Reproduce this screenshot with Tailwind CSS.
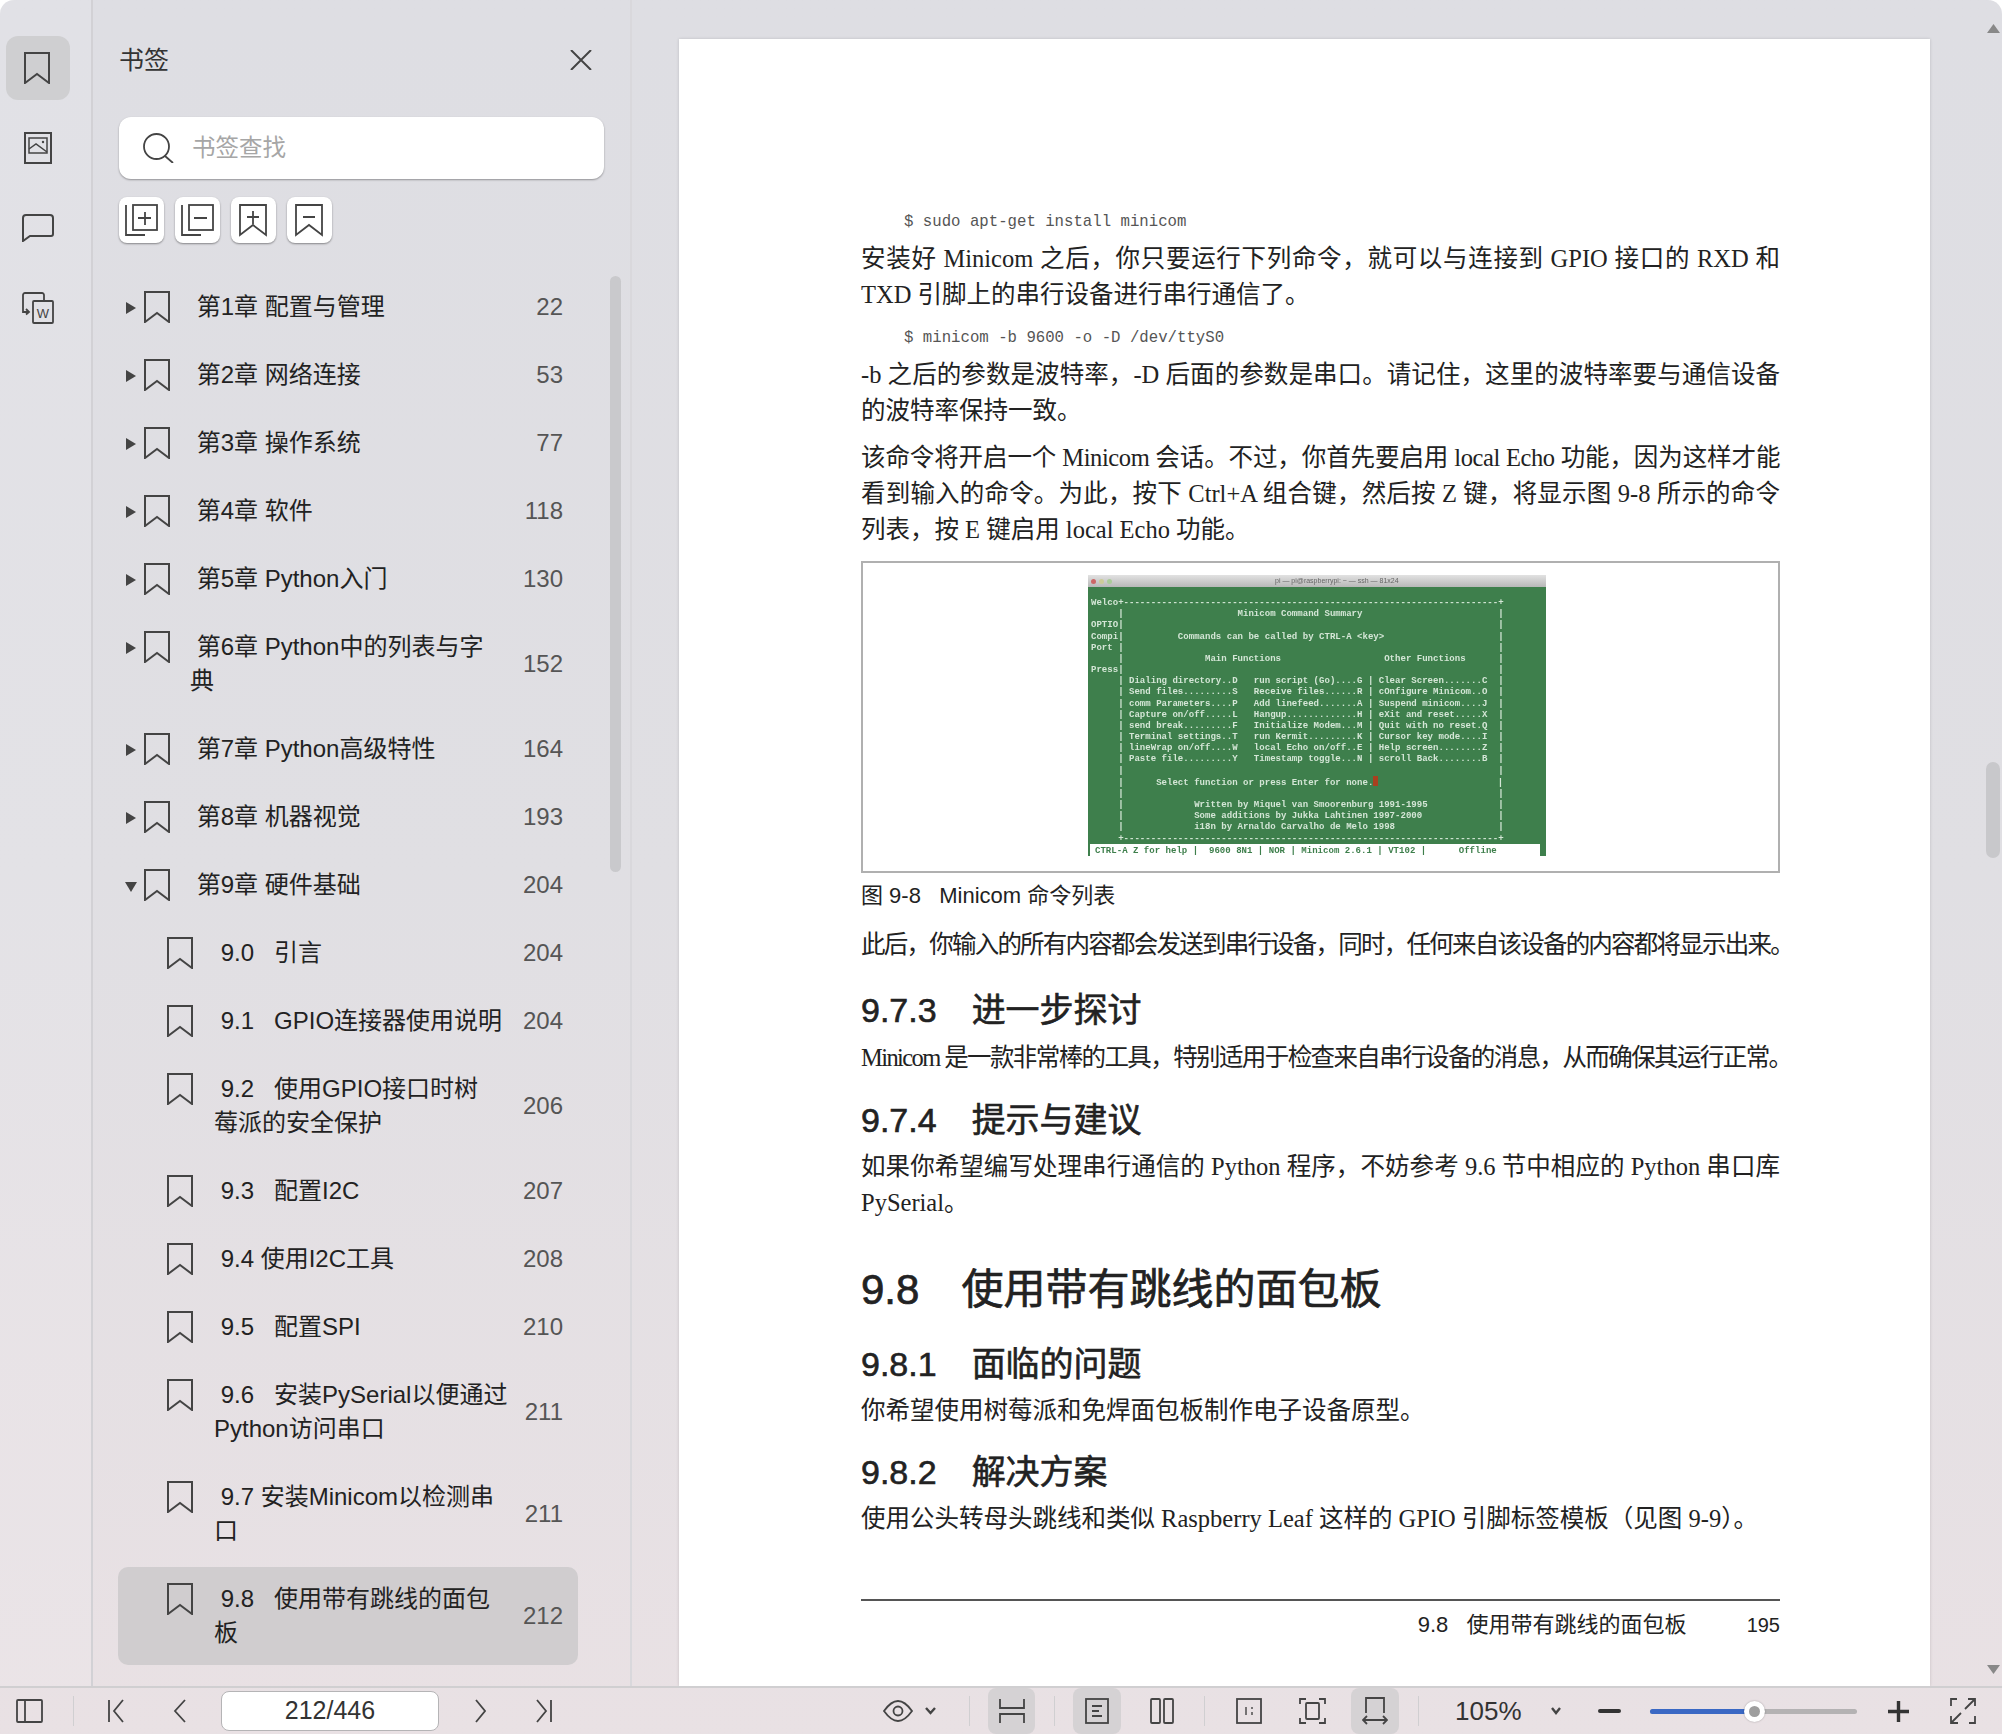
<!DOCTYPE html>
<html lang="zh">
<head>
<meta charset="utf-8">
<title>PDF</title>
<script src="https://cdn.jsdelivr.net/npm/@tailwindcss/browser@4"></script>
</head>
<body class="bg-white">
<div class="w-[2002px] h-[1734px] flex flex-col overflow-hidden rounded-t-[14px] bg-linear-to-b from-[#dedee3] via-[#e0dfe3] to-[#e9e1e4] font-['Liberation_Sans','Noto_Sans_CJK_SC',sans-serif] text-[#222]">
  <div class="flex h-[1686px] relative">
    <!-- rail -->
    <div class="w-[93px] shrink-0 border-r-2 border-[#d2d1d5] bg-white/10 flex flex-col items-start pt-[36px]">
      <div class="ml-[6px] w-[64px] h-[64px] rounded-[12px] bg-[#cfcfd1] flex items-center justify-center">
        <svg class="mr-[2px]" width="26" height="32" viewBox="0 0 26 32" fill="none" stroke="#444" stroke-width="2"><path d="M1 1h24v30L13 22 1 31z"/></svg>
      </div>
      <svg class="ml-[24px] mt-[32px]" width="28" height="32" viewBox="0 0 28 32" fill="none" stroke="#444" stroke-width="2"><rect x="1" y="1" width="26" height="30"/><rect x="5" y="6" width="18" height="15" stroke-width="1.5"/><path d="M5 17l7-5 11 8" stroke-width="1.5"/><circle cx="19" cy="10" r="1.2" fill="#444" stroke="none"/></svg>
      <svg class="ml-[22px] mt-[50px]" width="32" height="28" viewBox="0 0 32 28" fill="none" stroke="#444" stroke-width="2"><path d="M4 1h24a3 3 0 0 1 3 3v16a2 2 0 0 1-2 2H8l-7 5V4a3 3 0 0 1 3-3z"/></svg>
      <svg class="ml-[22px] mt-[50px]" width="32" height="32" viewBox="0 0 32 32" fill="none" stroke="#444" stroke-width="1.8"><path d="M22 9V3a2 2 0 0 0-2-2H3a2 2 0 0 0-2 2v17h6M4 17l3 3-3 2.500"/><rect x="11" y="9" width="20" height="22" rx="1"/><text x="21" y="26" text-anchor="middle" font-size="13" font-family="Liberation Sans" fill="#444" stroke="none">W</text></svg>
    </div>
    <!-- sidebar -->
    <div class="w-[539px] shrink-0 border-r-2 border-[#d9d8dc] relative pt-[40px]">
      <div class="flex items-center justify-between h-[40px] pl-[26px] pr-[38px]">
        <span class="text-[25px] leading-[40px] text-[#333]">书签</span>
        <svg width="22" height="20" viewBox="0 0 22 20" fill="none" stroke="#444" stroke-width="2"><path d="M1 0l20 20M21 0L1 20"/></svg>
      </div>
      <div class="ml-[26px] mt-[37px] w-[485px] h-[62px] rounded-[12px] bg-white shadow-[0_1px_2px_rgba(0,0,0,0.35)] flex items-center pl-[24px]">
        <svg width="31" height="30" viewBox="0 0 31 30" fill="none" stroke="#444" stroke-width="1.8"><circle cx="13.5" cy="13.5" r="12.5"/><path d="M22 23l8 7"/></svg>
        <span class="ml-[18px] pt-[2px] text-[23.5px] text-[#a6a6a6]">书签查找</span>
      </div>
      <div class="ml-[26px] mt-[18px] flex gap-[10px]">
        <div class="w-[45px] h-[46px] rounded-[8px] bg-white shadow-[0_1px_2px_rgba(0,0,0,0.4)]"><svg width="45" height="46" viewBox="0 0 45 46" fill="none" stroke="#444" stroke-width="1.8"><rect x="14" y="8" width="24" height="25"/><path d="M7 8v30h19M26 15v13M19 21h13"/></svg></div>
        <div class="w-[45px] h-[46px] rounded-[8px] bg-white shadow-[0_1px_2px_rgba(0,0,0,0.4)] ml-[1px]"><svg width="45" height="46" viewBox="0 0 45 46" fill="none" stroke="#444" stroke-width="1.8"><rect x="14" y="8" width="24" height="25"/><path d="M7 8v30h19M19 21h13"/></svg></div>
        <div class="w-[45px] h-[46px] rounded-[8px] bg-white shadow-[0_1px_2px_rgba(0,0,0,0.4)] ml-[1px]"><svg width="45" height="46" viewBox="0 0 45 46" fill="none" stroke="#444" stroke-width="1.8"><path d="M9 8h26v30L22 28 9 38zM22 14v13M16 20h12"/></svg></div>
        <div class="w-[45px] h-[46px] rounded-[8px] bg-white shadow-[0_1px_2px_rgba(0,0,0,0.4)] ml-[1px]"><svg width="45" height="46" viewBox="0 0 45 46" fill="none" stroke="#444" stroke-width="1.8"><path d="M9 8h26v30L22 28 9 38zM16 20h12"/></svg></div>
      </div>
      <!-- scrollbar -->
      <div class="absolute left-[517px] top-[276px] w-[11px] h-[596px] rounded-full bg-[#c9c9cc]"></div>
      <!-- list -->
      <div class="ml-[25px] mt-[32px] w-[460px] text-[24px] leading-[34px] flex flex-col gap-[4px]">
        <div class="flex items-center py-[15px] pr-[15px]"><svg class="self-start mt-[11px] ml-[7px]" width="12" height="14" viewBox="0 0 12 14" fill="#444"><path d="M1 1l10 6-10 6z"/></svg><svg class="self-start mt-[1px] ml-[7px]" width="26" height="32" viewBox="0 0 26 32" fill="none" stroke="#444" stroke-width="2"><path d="M1 1h24v30L13 22 1 31z"/></svg><div class="flex-1 ml-[20px] whitespace-pre"> 第1章 配置与管理</div><div class="text-[#555]">22</div></div>
        <div class="flex items-center py-[15px] pr-[15px]"><svg class="self-start mt-[11px] ml-[7px]" width="12" height="14" viewBox="0 0 12 14" fill="#444"><path d="M1 1l10 6-10 6z"/></svg><svg class="self-start mt-[1px] ml-[7px]" width="26" height="32" viewBox="0 0 26 32" fill="none" stroke="#444" stroke-width="2"><path d="M1 1h24v30L13 22 1 31z"/></svg><div class="flex-1 ml-[20px] whitespace-pre"> 第2章 网络连接</div><div class="text-[#555]">53</div></div>
        <div class="flex items-center py-[15px] pr-[15px]"><svg class="self-start mt-[11px] ml-[7px]" width="12" height="14" viewBox="0 0 12 14" fill="#444"><path d="M1 1l10 6-10 6z"/></svg><svg class="self-start mt-[1px] ml-[7px]" width="26" height="32" viewBox="0 0 26 32" fill="none" stroke="#444" stroke-width="2"><path d="M1 1h24v30L13 22 1 31z"/></svg><div class="flex-1 ml-[20px] whitespace-pre"> 第3章 操作系统</div><div class="text-[#555]">77</div></div>
        <div class="flex items-center py-[15px] pr-[15px]"><svg class="self-start mt-[11px] ml-[7px]" width="12" height="14" viewBox="0 0 12 14" fill="#444"><path d="M1 1l10 6-10 6z"/></svg><svg class="self-start mt-[1px] ml-[7px]" width="26" height="32" viewBox="0 0 26 32" fill="none" stroke="#444" stroke-width="2"><path d="M1 1h24v30L13 22 1 31z"/></svg><div class="flex-1 ml-[20px] whitespace-pre"> 第4章 软件</div><div class="text-[#555]">118</div></div>
        <div class="flex items-center py-[15px] pr-[15px]"><svg class="self-start mt-[11px] ml-[7px]" width="12" height="14" viewBox="0 0 12 14" fill="#444"><path d="M1 1l10 6-10 6z"/></svg><svg class="self-start mt-[1px] ml-[7px]" width="26" height="32" viewBox="0 0 26 32" fill="none" stroke="#444" stroke-width="2"><path d="M1 1h24v30L13 22 1 31z"/></svg><div class="flex-1 ml-[20px] whitespace-pre"> 第5章 Python入门</div><div class="text-[#555]">130</div></div>
        <div class="flex items-center py-[15px] pr-[15px]"><svg class="self-start mt-[11px] ml-[7px]" width="12" height="14" viewBox="0 0 12 14" fill="#444"><path d="M1 1l10 6-10 6z"/></svg><svg class="self-start mt-[1px] ml-[7px]" width="26" height="32" viewBox="0 0 26 32" fill="none" stroke="#444" stroke-width="2"><path d="M1 1h24v30L13 22 1 31z"/></svg><div class="flex-1 ml-[20px] whitespace-pre"> 第6章 Python中的列表与字<br>典</div><div class="text-[#555]">152</div></div>
        <div class="flex items-center py-[15px] pr-[15px]"><svg class="self-start mt-[11px] ml-[7px]" width="12" height="14" viewBox="0 0 12 14" fill="#444"><path d="M1 1l10 6-10 6z"/></svg><svg class="self-start mt-[1px] ml-[7px]" width="26" height="32" viewBox="0 0 26 32" fill="none" stroke="#444" stroke-width="2"><path d="M1 1h24v30L13 22 1 31z"/></svg><div class="flex-1 ml-[20px] whitespace-pre"> 第7章 Python高级特性</div><div class="text-[#555]">164</div></div>
        <div class="flex items-center py-[15px] pr-[15px]"><svg class="self-start mt-[11px] ml-[7px]" width="12" height="14" viewBox="0 0 12 14" fill="#444"><path d="M1 1l10 6-10 6z"/></svg><svg class="self-start mt-[1px] ml-[7px]" width="26" height="32" viewBox="0 0 26 32" fill="none" stroke="#444" stroke-width="2"><path d="M1 1h24v30L13 22 1 31z"/></svg><div class="flex-1 ml-[20px] whitespace-pre"> 第8章 机器视觉</div><div class="text-[#555]">193</div></div>
        <div class="flex items-center py-[15px] pr-[15px]"><svg class="self-start mt-[11px] ml-[7px]" width="12" height="14" viewBox="0 0 12 14" fill="#444"><path d="M0 3h12L6 13z"/></svg><svg class="self-start mt-[1px] ml-[7px]" width="26" height="32" viewBox="0 0 26 32" fill="none" stroke="#444" stroke-width="2"><path d="M1 1h24v30L13 22 1 31z"/></svg><div class="flex-1 ml-[20px] whitespace-pre"> 第9章 硬件基础</div><div class="text-[#555]">204</div></div>
        <div class="flex items-center py-[15px] pr-[15px] pl-[49px]"><svg class="self-start mt-[1px] shrink-0" width="26" height="32" viewBox="0 0 26 32" fill="none" stroke="#444" stroke-width="2"><path d="M1 1h24v30L13 22 1 31z"/></svg><div class="flex-1 ml-[21px] whitespace-pre"> 9.0   引言</div><div class="text-[#555]">204</div></div>
        <div class="flex items-center py-[15px] pr-[15px] pl-[49px]"><svg class="self-start mt-[1px] shrink-0" width="26" height="32" viewBox="0 0 26 32" fill="none" stroke="#444" stroke-width="2"><path d="M1 1h24v30L13 22 1 31z"/></svg><div class="flex-1 ml-[21px] whitespace-pre"> 9.1   GPIO连接器使用说明</div><div class="text-[#555]">204</div></div>
        <div class="flex items-center py-[15px] pr-[15px] pl-[49px]"><svg class="self-start mt-[1px] shrink-0" width="26" height="32" viewBox="0 0 26 32" fill="none" stroke="#444" stroke-width="2"><path d="M1 1h24v30L13 22 1 31z"/></svg><div class="flex-1 ml-[21px] whitespace-pre"> 9.2   使用GPIO接口时树<br>莓派的安全保护</div><div class="text-[#555]">206</div></div>
        <div class="flex items-center py-[15px] pr-[15px] pl-[49px]"><svg class="self-start mt-[1px] shrink-0" width="26" height="32" viewBox="0 0 26 32" fill="none" stroke="#444" stroke-width="2"><path d="M1 1h24v30L13 22 1 31z"/></svg><div class="flex-1 ml-[21px] whitespace-pre"> 9.3   配置I2C</div><div class="text-[#555]">207</div></div>
        <div class="flex items-center py-[15px] pr-[15px] pl-[49px]"><svg class="self-start mt-[1px] shrink-0" width="26" height="32" viewBox="0 0 26 32" fill="none" stroke="#444" stroke-width="2"><path d="M1 1h24v30L13 22 1 31z"/></svg><div class="flex-1 ml-[21px] whitespace-pre"> 9.4 使用I2C工具</div><div class="text-[#555]">208</div></div>
        <div class="flex items-center py-[15px] pr-[15px] pl-[49px]"><svg class="self-start mt-[1px] shrink-0" width="26" height="32" viewBox="0 0 26 32" fill="none" stroke="#444" stroke-width="2"><path d="M1 1h24v30L13 22 1 31z"/></svg><div class="flex-1 ml-[21px] whitespace-pre"> 9.5   配置SPI</div><div class="text-[#555]">210</div></div>
        <div class="flex items-center py-[15px] pr-[15px] pl-[49px]"><svg class="self-start mt-[1px] shrink-0" width="26" height="32" viewBox="0 0 26 32" fill="none" stroke="#444" stroke-width="2"><path d="M1 1h24v30L13 22 1 31z"/></svg><div class="flex-1 ml-[21px] whitespace-pre"> 9.6   安装PySerial以便通过<br>Python访问串口</div><div class="text-[#555]">211</div></div>
        <div class="flex items-center py-[15px] pr-[15px] pl-[49px]"><svg class="self-start mt-[1px] shrink-0" width="26" height="32" viewBox="0 0 26 32" fill="none" stroke="#444" stroke-width="2"><path d="M1 1h24v30L13 22 1 31z"/></svg><div class="flex-1 ml-[21px] whitespace-pre"> 9.7 安装Minicom以检测串<br>口</div><div class="text-[#555]">211</div></div>
        <div class="flex items-center py-[15px] pr-[15px] pl-[49px] rounded-[10px] bg-[#d0cdcf]"><svg class="self-start mt-[1px] shrink-0" width="26" height="32" viewBox="0 0 26 32" fill="none" stroke="#444" stroke-width="2"><path d="M1 1h24v30L13 22 1 31z"/></svg><div class="flex-1 ml-[21px] whitespace-pre"> 9.8   使用带有跳线的面包<br>板</div><div class="text-[#555]">212</div></div>
      </div>
    </div>
    <!-- main document -->
    <div class="flex-1 relative overflow-hidden">
      <div class="ml-[47px] mt-[39px] w-[1251px] h-[1647px] bg-white shadow-[0_0_3px_rgba(0,0,0,0.15)] pl-[182px] pr-[150px] pt-[168px] text-[#222]">
        <div class="h-[30px] leading-[30px] pl-[43px] text-[15.7px] text-[#555] font-['Liberation_Mono',monospace] whitespace-pre">$ sudo apt-get install minicom</div>
        <div class="mt-[4px] text-[24.5px] leading-[36px] font-['Liberation_Serif','Noto_Sans_CJK_SC',serif]">
          <div class="text-justify [text-align-last:justify]">安装好 Minicom 之后&#65292;你只要运行下列命令&#65292;就可以与连接到 GPIO 接口的 RXD 和</div>
          <div>TXD 引脚上的串行设备进行串行通信了。</div>
        </div>
        <div class="mt-[10px] h-[30px] leading-[30px] pl-[43px] text-[15.7px] text-[#555] font-['Liberation_Mono',monospace] whitespace-pre">$ minicom -b 9600 -o -D /dev/ttyS0</div>
        <div class="mt-[4px] text-[24.5px] leading-[36px] font-['Liberation_Serif','Noto_Sans_CJK_SC',serif]">
          <div class="text-justify [text-align-last:justify]">-b 之后的参数是波特率&#65292;-D 后面的参数是串口。请记住&#65292;这里的波特率要与通信设备</div>
          <div>的波特率保持一致。</div>
        </div>
        <div class="mt-[11px] text-[24.5px] leading-[36px] font-['Liberation_Serif','Noto_Sans_CJK_SC',serif]">
          <div class="text-justify [text-align-last:justify] tracking-[-0.4px]">该命令将开启一个 Minicom 会话。不过&#65292;你首先要启用 local Echo 功能&#65292;因为这样才能</div>
          <div class="text-justify [text-align-last:justify]">看到输入的命令。为此&#65292;按下 Ctrl+A 组合键&#65292;然后按 Z 键&#65292;将显示图 9-8 所示的命令</div>
          <div>列表&#65292;按 E 键启用 local Echo 功能。</div>
        </div>
        <!-- figure -->
        <div class="mt-[13px] h-[312px] border-2 border-[#b0b0b0] pt-[12px] pl-[225px]">
          <div class="w-[458px] h-[281px] bg-[#3e7f4c] overflow-hidden">
            <div class="h-[12px] bg-linear-to-b from-[#e2e2e2] to-[#b8b8b8] flex items-center pl-[3px] gap-[3px]">
              <span class="w-[5px] h-[5px] rounded-full bg-[#c66]"></span><span class="w-[5px] h-[5px] rounded-full bg-[#cc9]"></span><span class="w-[5px] h-[5px] rounded-full bg-[#ac9]"></span>
              <span class="ml-[160px] text-[7px] leading-[12px] text-[#666] blur-[0.3px] whitespace-pre">pi — pi@raspberrypi: ~ — ssh — 81x24</span>
            </div>
            <pre class="pl-[3px] pt-[10px] text-[9.05px] leading-[11.17px] font-bold text-[#d4e6d6] font-['Liberation_Mono',monospace] blur-[0.4px]">Welco+---------------------------------------------------------------------+
     |                     Minicom Command Summary                         |
OPTIO|                                                                     |
Compi|          Commands can be called by CTRL-A &lt;key&gt;                     |
Port |                                                                     |
     |               Main Functions                   Other Functions      |
Press|                                                                     |
     | Dialing directory..D   run script (Go)....G | Clear Screen.......C  |
     | Send files.........S   Receive files......R | cOnfigure Minicom..O  |
     | comm Parameters....P   Add linefeed.......A | Suspend minicom....J  |
     | Capture on/off.....L   Hangup.............H | eXit and reset.....X  |
     | send break.........F   Initialize Modem...M | Quit with no reset.Q  |
     | Terminal settings..T   run Kermit.........K | Cursor key mode....I  |
     | lineWrap on/off....W   local Echo on/off..E | Help screen........Z  |
     | Paste file.........Y   Timestamp toggle...N | scroll Back........B  |
     |                                                                     |
     |      Select function or press Enter for none.<span class="inline-block w-[5px] h-[10px] align-[-1px] bg-[#a8401f]"></span>                      |
     |                                                                     |
     |             Written by Miquel van Smoorenburg 1991-1995             |
     |             Some additions by Jukka Lahtinen 1997-2000              |
     |             i18n by Arnaldo Carvalho de Melo 1998                   |
     +---------------------------------------------------------------------+</pre>
            <pre class="ml-[2px] w-[450px] h-[13px] bg-white text-[#3e7f4c] pl-[5px] text-[9.05px] leading-[13px] font-bold font-['Liberation_Mono',monospace] blur-[0.3px]">CTRL-A Z for help |  9600 8N1 | NOR | Minicom 2.6.1 | VT102 |      Offline</pre>
          </div>
        </div>
        <div class="mt-[8px] h-[30px] leading-[30px] text-[22px] text-[#222] whitespace-pre">图 9-8   Minicom 命令列表</div>
        <div class="mt-[16px] text-[24.5px] leading-[36px] tracking-[-1.77px] whitespace-nowrap font-['Liberation_Serif','Noto_Sans_CJK_SC',serif]">此后&#65292;你输入的所有内容都会发送到串行设备&#65292;同时&#65292;任何来自该设备的内容都将显示出来。</div>
        <div class="mt-[25px] h-[44px] leading-[44px] text-[34px] whitespace-pre [-webkit-text-stroke:0.6px_#222]">9.7.3<span class="ml-[35px]">进一步探讨</span></div>
        <div class="mt-[8px] text-[24.5px] leading-[36px] tracking-[-1.6px] whitespace-nowrap font-['Liberation_Serif','Noto_Sans_CJK_SC',serif]">Minicom 是一款非常棒的工具&#65292;特别适用于检查来自串行设备的消息&#65292;从而确保其运行正常。</div>
        <div class="mt-[22px] h-[44px] leading-[44px] text-[34px] whitespace-pre [-webkit-text-stroke:0.6px_#222]">9.7.4<span class="ml-[35px]">提示与建议</span></div>
        <div class="mt-[7px] text-[24.5px] leading-[36px] font-['Liberation_Serif','Noto_Sans_CJK_SC',serif]">
          <div class="text-justify [text-align-last:justify]">如果你希望编写处理串行通信的 Python 程序&#65292;不妨参考 9.6 节中相应的 Python 串口库</div>
          <div>PySerial。</div>
        </div>
        <div class="mt-[41px] h-[56px] leading-[56px] text-[42px] whitespace-pre [-webkit-text-stroke:0.7px_#222]">9.8<span class="ml-[42px]">使用带有跳线的面包板</span></div>
        <div class="mt-[24px] h-[44px] leading-[44px] text-[34px] whitespace-pre [-webkit-text-stroke:0.6px_#222]">9.8.1<span class="ml-[35px]">面临的问题</span></div>
        <div class="mt-[7px] text-[24.5px] leading-[36px] font-['Liberation_Serif','Noto_Sans_CJK_SC',serif]">你希望使用树莓派和免焊面包板制作电子设备原型。</div>
        <div class="mt-[21px] h-[44px] leading-[44px] text-[34px] whitespace-pre [-webkit-text-stroke:0.6px_#222]">9.8.2<span class="ml-[35px]">解决方案</span></div>
        <div class="mt-[7px] text-[24.5px] leading-[36px] font-['Liberation_Serif','Noto_Sans_CJK_SC',serif]">使用公头转母头跳线和类似 Raspberry Leaf 这样的 GPIO 引脚标签模板&#65288;见图 9-9&#65289;。</div>
        <div class="mt-[62px] border-t-2 border-[#555]"></div>
        <div class="mt-[9px] h-[30px] leading-[30px] text-[22px] flex justify-end whitespace-pre"><span>9.8   使用带有跳线的面包板</span><span class="ml-[60px] text-[20px]">195</span></div>
      </div>
      <!-- main scrollbar overlay -->
      <svg class="absolute left-[1355px] top-[24px]" width="13" height="9" viewBox="0 0 13 9" fill="#888"><path d="M6.5 0L13 9H0z"/></svg>
      <svg class="absolute left-[1355px] top-[1665px]" width="13" height="9" viewBox="0 0 13 9" fill="#888"><path d="M0 0h13L6.5 9z"/></svg>
      <div class="absolute left-[1354px] top-[762px] w-[14px] h-[96px] rounded-full bg-[#c8c8cb]"></div>
    </div>
  </div>
  <!-- toolbar -->
  <div class="h-[48px] shrink-0 border-t-2 border-[#d0cfd1] flex items-center text-[#333]">
    <svg class="ml-[16px]" width="27" height="24" viewBox="0 0 27 24" fill="none" stroke="#444" stroke-width="1.8"><rect x="1" y="1" width="25" height="22" rx="1"/><path d="M9 1v22"/></svg>
    <div class="ml-[30px] w-px h-[30px] bg-[#d0cfd1]"></div>
    <svg class="ml-[34px]" width="16" height="24" viewBox="0 0 16 24" fill="none" stroke="#444" stroke-width="1.8"><path d="M1 1v22M15 1L6 12l9 11"/></svg>
    <svg class="ml-[49px]" width="13" height="24" viewBox="0 0 13 24" fill="none" stroke="#444" stroke-width="1.8"><path d="M12 1L2 12l10 11"/></svg>
    <div class="ml-[35px] w-[218px] h-[40px] rounded-[8px] bg-white border border-[#b5b4b6] flex items-center justify-center text-[25px] text-[#333]">212/446</div>
    <svg class="ml-[36px]" width="11" height="24" viewBox="0 0 11 24" fill="none" stroke="#444" stroke-width="1.8"><path d="M1 1l9 11-9 11"/></svg>
    <svg class="ml-[50px]" width="16" height="24" viewBox="0 0 16 24" fill="none" stroke="#444" stroke-width="1.8"><path d="M1 1l9 11-9 11M15 1v22"/></svg>
    <svg class="ml-[331px]" width="30" height="22" viewBox="0 0 30 22" fill="none" stroke="#444" stroke-width="1.8"><path d="M1 11C6 4 10 1 15 1s9 3 14 10c-5 7-9 10-14 10S6 18 1 11z"/><circle cx="15" cy="11" r="4.5"/></svg>
    <svg class="ml-[12px]" width="11" height="8" viewBox="0 0 11 8" fill="none" stroke="#444" stroke-width="2.4"><path d="M1 1l4.5 5L10 1"/></svg>
    <div class="ml-[33px] w-px h-[30px] bg-[#d0cfd1]"></div>
    <div class="ml-[18px] w-[47px] h-[46px] rounded-[8px] bg-[#d5d2d4] flex items-center justify-center"><svg width="28" height="24" viewBox="0 0 28 24" fill="none" stroke="#444" stroke-width="1.8"><path d="M2 0v9h24V0M2 24v-9h24v9"/></svg></div>
    <div class="ml-[19px] w-px h-[30px] bg-[#d0cfd1]"></div>
    <div class="ml-[18px] w-[48px] h-[46px] rounded-[8px] bg-[#d5d2d4] flex items-center justify-center"><svg width="24" height="26" viewBox="0 0 24 26" fill="none" stroke="#444" stroke-width="1.8"><rect x="1" y="1" width="22" height="24"/><path d="M7 8h10M7 13h7M7 18h10"/></svg></div>
    <svg class="ml-[29px]" width="24" height="26" viewBox="0 0 24 26" fill="none" stroke="#444" stroke-width="1.8"><rect x="1" y="1" width="9" height="24" rx="1"/><rect x="14" y="1" width="9" height="24" rx="1"/></svg>
    <div class="ml-[30px] w-px h-[30px] bg-[#d0cfd1]"></div>
    <svg class="ml-[31px]" width="26" height="26" viewBox="0 0 26 26" fill="none" stroke="#444" stroke-width="1.8"><rect x="1" y="1" width="24" height="24"/><path d="M10 9v8M16 9v2M16 14v3" stroke-width="1.4"/></svg>
    <svg class="ml-[37px]" width="27" height="26" viewBox="0 0 27 26" fill="none" stroke="#444" stroke-width="1.8"><path d="M1 6V1h6M20 1h6v5M26 20v5h-6M7 25H1v-5"/><rect x="7" y="5" width="13" height="16" rx="1"/></svg>
    <div class="ml-[25px] w-[48px] h-[46px] rounded-[8px] bg-[#d5d2d4] flex items-center justify-center"><svg width="26" height="28" viewBox="0 0 26 28" fill="none" stroke="#444" stroke-width="1.8"><path d="M4 16V1h18v15M1 23h24M5 19l-4 4 4 4M21 19l4 4-4 4"/></svg></div>
    <div class="ml-[19px] w-px h-[30px] bg-[#d0cfd1]"></div>
    <div class="ml-[36px] w-[68px] text-[26px] text-[#333]">105%</div>
    <svg class="ml-[28px]" width="10" height="8" viewBox="0 0 10 8" fill="none" stroke="#444" stroke-width="2.4"><path d="M1 1l4 5 4-5"/></svg>
    <div class="ml-[37px] w-[23px] h-[4px] rounded-full bg-[#333]"></div>
    <div class="ml-[29px] w-[207px] h-[5px] rounded-full bg-[#b4b2b3] relative">
      <div class="h-full w-[100px] rounded-full bg-[#3a68c4]"></div>
      <div class="absolute left-[94px] top-[-8px] w-[21px] h-[21px] rounded-full bg-white shadow-[0_0_2px_rgba(0,0,0,0.3)] flex items-center justify-center"><div class="w-[11px] h-[11px] rounded-full bg-[#9e9e9e]"></div></div>
    </div>
    <svg class="ml-[31px]" width="21" height="21" viewBox="0 0 21 21" fill="none" stroke="#333" stroke-width="3.4"><path d="M0 10.5h21M10.5 0v21"/></svg>
    <svg class="ml-[41px]" width="26" height="26" viewBox="0 0 26 26" fill="none" stroke="#444" stroke-width="1.8"><path d="M7 1H1v7M25 18v7h-6M15 11l10-10M25 8V1h-7M11 15L1 25M1 18v7h7"/></svg>
  </div>
</div>
</body>
</html>
